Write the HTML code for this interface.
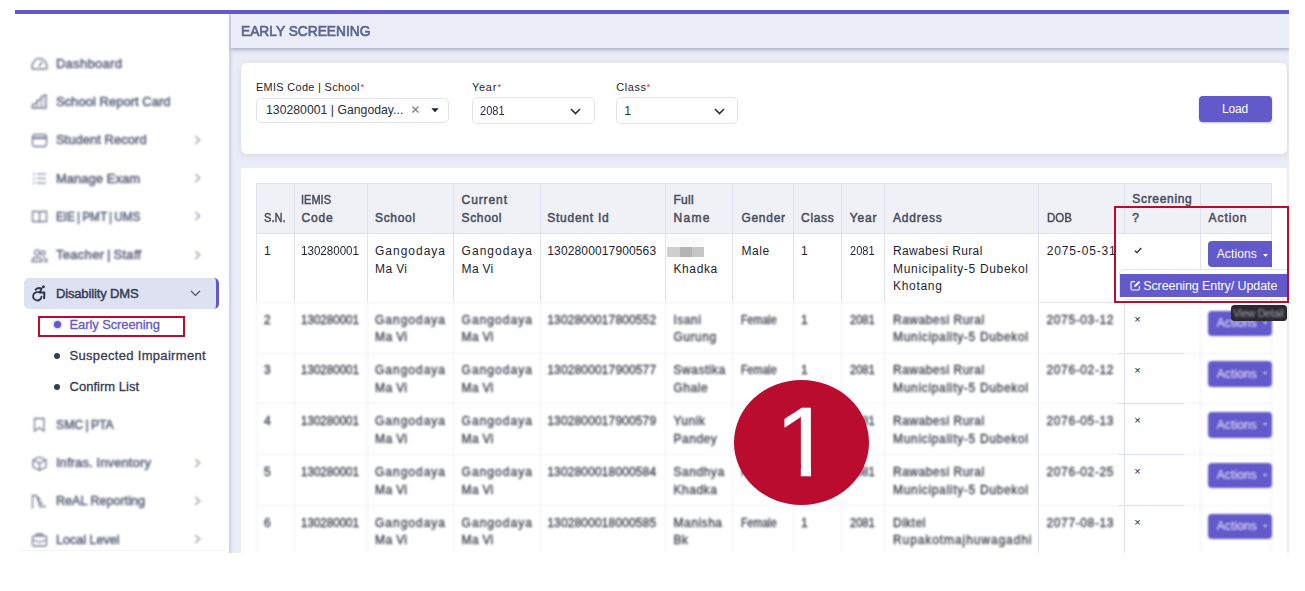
<!DOCTYPE html>
<html lang="en">
<head>
<meta charset="utf-8">
<title>Early Screening</title>
<style>
html,body{margin:0;padding:0;background:#fff;}
body{width:1305px;height:591px;overflow:hidden;position:relative;font-family:"Liberation Sans",sans-serif;}
#app{position:absolute;left:0;top:0;width:1305px;height:591px;overflow:hidden;clip-path:inset(10px 16px 38px 15px);background:#fff;}
.a{position:absolute;box-sizing:border-box;}
.t{position:absolute;white-space:nowrap;line-height:1;font-family:"Liberation Sans","DejaVu Sans",sans-serif;}
.vl{position:absolute;width:1px;background:#dfe2ec;}
.hl{position:absolute;height:1px;background:#dfe2ec;}
.btn{position:absolute;background:#6259ca;border-radius:4px;}
.sel{position:absolute;box-sizing:border-box;border:1px solid #e1e4ee;border-radius:5px;background:#fff;}
.ico{position:absolute;filter:blur(1.05px);}
svg{overflow:visible}
</style>
</head>
<body>
<div id="app">
  <!-- top purple bar -->
  <div class="a" style="left:15px;top:10px;width:1274px;height:4.2px;background:#6259ca;"></div>
  <!-- sidebar -->
  <div class="a" style="left:15px;top:14px;width:214.5px;height:545px;background:#fff;"></div>
  <!-- main bg -->
  <div class="a" style="left:229.3px;top:14px;width:1060px;height:545px;background:#eaedf7;box-shadow:inset 3px 0 3px -1px rgba(150,155,195,.38);"></div>
  <!-- page header -->
  <div class="a" style="left:231px;top:14px;width:1059px;height:34.3px;background:#ebedf8;box-shadow:0 1.5px 2px rgba(130,135,165,.38),0 3px 5px rgba(120,125,160,.2);"></div>
  <!-- filter card -->
  <div class="a" style="left:240.8px;top:62.8px;width:1045.8px;height:91.1px;background:#fff;border-radius:6px;box-shadow:0 2px 6px rgba(160,165,200,.25);"></div>
  <!-- table card -->
  <div class="a" style="left:240.8px;top:168px;width:1045.8px;height:400px;background:#fff;border-radius:1px;"></div>

  <!-- selects -->
  <div class="sel" style="left:256px;top:97.8px;width:193.2px;height:24.8px;"></div>
  <div class="sel" style="left:472px;top:97.4px;width:122.5px;height:26.3px;"></div>
  <div class="sel" style="left:615.8px;top:97.4px;width:121.8px;height:26.3px;"></div>
  <svg class="a" style="left:412px;top:106.3px;" width="7" height="7" viewBox="0 0 7 7"><path d="M0.5 0.5 L6.5 6.5 M6.5 0.5 L0.5 6.5" stroke="#7c7f88" stroke-width="1.25" fill="none"/></svg>
  <svg class="a" style="left:431.4px;top:108.2px;" width="8" height="4.4" viewBox="0 0 9 5"><path d="M0.3 0.3 H8.7 L4.5 4.7 Z" fill="#1f2330"/></svg>
  <svg class="a" style="left:569.6px;top:107.9px;" width="11" height="7" viewBox="0 0 11 7"><path d="M1 1 L5.5 5.6 L10 1" stroke="#2a2e3b" stroke-width="1.5" fill="none"/></svg>
  <svg class="a" style="left:713.6px;top:107.9px;" width="11" height="7" viewBox="0 0 11 7"><path d="M1 1 L5.5 5.6 L10 1" stroke="#2a2e3b" stroke-width="1.5" fill="none"/></svg>
  <!-- load button -->
  <div class="btn" style="left:1199px;top:96px;width:73px;height:26px;box-shadow:0 1px 2px rgba(98,89,202,.4);"></div>

  <!-- sidebar active -->
  <div class="a" style="left:24.4px;top:278.3px;width:194.2px;height:30.5px;background:#dde1f2;border-radius:5px;border-right:3px solid #6259ca;"></div>
  <div class="a" style="left:38px;top:316px;width:146.5px;height:20.6px;border:2px solid #ba0c2f;"></div>
  <div class="a" style="left:53.6px;top:321px;width:7.4px;height:7.4px;border-radius:50%;background:#6259ca;box-shadow:0 0 2px 1px rgba(98,89,202,.35);"></div>
  <div class="a" style="left:54.3px;top:353px;width:6px;height:6px;border-radius:50%;background:#363c52;"></div>
  <div class="a" style="left:54.3px;top:384px;width:6px;height:6px;border-radius:50%;background:#363c52;"></div>
  <div class="a" style="left:20px;top:550px;width:205px;height:1px;background:#f3f3f7;filter:blur(.6px);"></div>
  <svg class="ico" style="left:31px;top:56.0px;" width="17" height="15" viewBox="0 0 17 15" fill="none" stroke="#757b93" stroke-width="1.3"><path d="M1 11.5 A7.5 9 0 0 1 16 11.5 Q16 13 14.8 13 H2.2 Q1 13 1 11.5 Z" stroke-width="1.5"/><path d="M8 10.5 L11.2 5.6" stroke-width="1.5"/></svg>
<svg class="ico" style="left:31px;top:94.0px;" width="17" height="15" viewBox="0 0 17 15" fill="none" stroke="#757b93" stroke-width="1.3"><path d="M1.4 14 V10.4 L5.8 9 V6.8 L10.3 5 V2.8 L15 0.9 V14 Z" fill="#e6e8f0" stroke-width="1.4"/><path d="M5.8 9 V14 M10.3 5 V14" stroke-width="1" stroke="#9ea3b6"/></svg>
<svg class="ico" style="left:31px;top:132.5px;" width="17" height="15" viewBox="0 0 17 15" fill="none" stroke="#757b93" stroke-width="1.3"><rect x="1.5" y="1.5" width="14" height="12" rx="2.5"/><path d="M1.5 5 H15.5" stroke-width="2.2"/></svg>
<svg class="ico" style="left:31px;top:171.0px;" width="17" height="15" viewBox="0 0 17 15" fill="none" stroke="#757b93" stroke-width="1.3"><path d="M2 3 H4 M6 3 H15 M2 7.5 H4 M6 7.5 H15 M2 12 H4 M6 12 H15" stroke="#9a9fb0"/></svg>
<svg class="ico" style="left:31px;top:209.0px;" width="17" height="15" viewBox="0 0 17 15" fill="none" stroke="#757b93" stroke-width="1.3"><path d="M1.5 2.5 H7 Q8.5 2.5 8.5 4 V13.5 Q8.5 12.5 7 12.5 H1.5 Z M15.5 2.5 H10 Q8.5 2.5 8.5 4 V13.5 Q8.5 12.5 10 12.5 H15.5 Z"/></svg>
<svg class="ico" style="left:31px;top:247.5px;" width="17" height="15" viewBox="0 0 17 15" fill="none" stroke="#757b93" stroke-width="1.3"><circle cx="6" cy="4.5" r="2.6"/><circle cx="12" cy="5" r="2.1"/><path d="M1 13.5 Q1 9.5 6 9.5 Q11 9.5 11 13.5 Z M12 9.8 Q16 9.8 16 13.5 H13"/></svg>
<svg class="ico" style="left:31px;top:417.0px;" width="17" height="15" viewBox="0 0 17 15" fill="none" stroke="#757b93" stroke-width="1.3"><path d="M3.5 1.5 H13 V14 L8.2 10.6 L3.5 14 Z"/></svg>
<svg class="ico" style="left:31px;top:455.5px;" width="17" height="15" viewBox="0 0 17 15" fill="none" stroke="#757b93" stroke-width="1.3"><path d="M8.5 1 L15 4 V11 L8.5 14.3 L2 11 V4 Z M2 4 L8.5 7.2 L15 4 M8.5 7.2 V14.3"/></svg>
<svg class="ico" style="left:31px;top:493.8px;" width="17" height="15" viewBox="0 0 17 15" fill="none" stroke="#757b93" stroke-width="1.3"><path d="M1.5 14.5 V1.5 H5.5 L8 5 M6 5.5 H10 M7 9 H12 M8 12.5 H15 M5.5 1.5 L9.5 13" /></svg>
<svg class="ico" style="left:31px;top:531.6px;" width="17" height="15" viewBox="0 0 17 15" fill="none" stroke="#757b93" stroke-width="1.3"><rect x="1.5" y="4" width="14" height="10" rx="1.5"/><path d="M5.5 4 V2 H11.5 V4 M1.5 8 L8.5 10 L15.5 8"/></svg>
<svg class="ico" style="left:194px;top:134.5px;" width="7" height="10" viewBox="0 0 7 10" fill="none" stroke="#9a9fb2" stroke-width="1.4"><path d="M1.2 1 L5.6 5 L1.2 9"/></svg>
<svg class="ico" style="left:194px;top:173.0px;" width="7" height="10" viewBox="0 0 7 10" fill="none" stroke="#9a9fb2" stroke-width="1.4"><path d="M1.2 1 L5.6 5 L1.2 9"/></svg>
<svg class="ico" style="left:194px;top:211.0px;" width="7" height="10" viewBox="0 0 7 10" fill="none" stroke="#9a9fb2" stroke-width="1.4"><path d="M1.2 1 L5.6 5 L1.2 9"/></svg>
<svg class="ico" style="left:194px;top:249.5px;" width="7" height="10" viewBox="0 0 7 10" fill="none" stroke="#9a9fb2" stroke-width="1.4"><path d="M1.2 1 L5.6 5 L1.2 9"/></svg>
<svg class="ico" style="left:194px;top:457.5px;" width="7" height="10" viewBox="0 0 7 10" fill="none" stroke="#9a9fb2" stroke-width="1.4"><path d="M1.2 1 L5.6 5 L1.2 9"/></svg>
<svg class="ico" style="left:194px;top:495.8px;" width="7" height="10" viewBox="0 0 7 10" fill="none" stroke="#9a9fb2" stroke-width="1.4"><path d="M1.2 1 L5.6 5 L1.2 9"/></svg>
<svg class="ico" style="left:194px;top:533.6px;" width="7" height="10" viewBox="0 0 7 10" fill="none" stroke="#9a9fb2" stroke-width="1.4"><path d="M1.2 1 L5.6 5 L1.2 9"/></svg>
<svg class="a" style="left:190px;top:290.2px;" width="11" height="7" viewBox="0 0 11 7" fill="none" stroke="#4a5066" stroke-width="1.2"><path d="M1 1 L5.5 5.4 L10 1"/></svg>
<svg class="a" style="left:32px;top:285px;" width="14" height="16" viewBox="0 0 14 16" fill="none" stroke="#2f354c" stroke-width="2" stroke-linecap="round" stroke-linejoin="round"><circle cx="11.4" cy="1.7" r="1.5" fill="#2f354c" stroke="none"/><path d="M3.7 4.7 Q6.3 1.8 9.5 3.6 L7.7 7.5 H12.4 L12.1 13.2"/><path d="M6.2 7.2 A4.2 4.2 0 1 0 9.5 11.6" stroke-width="1.8"/></svg>

  <!-- table -->
  <div class="a" style="left:256px;top:183.3px;width:1016px;height:50.2px;background:#f0f1f7;"></div>
  <div class="vl" style="left:255.5px;top:183.3px;height:119px;"></div>
<div class="vl" style="left:255.5px;top:302.3px;height:260px;background:#f1f2f7;filter:blur(.8px);"></div>
<div class="vl" style="left:293.5px;top:183.3px;height:119px;"></div>
<div class="vl" style="left:293.5px;top:302.3px;height:260px;background:#f1f2f7;filter:blur(.8px);"></div>
<div class="vl" style="left:366.8px;top:183.3px;height:119px;"></div>
<div class="vl" style="left:366.8px;top:302.3px;height:260px;background:#f1f2f7;filter:blur(.8px);"></div>
<div class="vl" style="left:452.7px;top:183.3px;height:119px;"></div>
<div class="vl" style="left:452.7px;top:302.3px;height:260px;background:#f1f2f7;filter:blur(.8px);"></div>
<div class="vl" style="left:540.0px;top:183.3px;height:119px;"></div>
<div class="vl" style="left:540.0px;top:302.3px;height:260px;background:#f1f2f7;filter:blur(.8px);"></div>
<div class="vl" style="left:664.7px;top:183.3px;height:119px;"></div>
<div class="vl" style="left:664.7px;top:302.3px;height:260px;background:#f1f2f7;filter:blur(.8px);"></div>
<div class="vl" style="left:732.0px;top:183.3px;height:119px;"></div>
<div class="vl" style="left:732.0px;top:302.3px;height:260px;background:#f1f2f7;filter:blur(.8px);"></div>
<div class="vl" style="left:792.8px;top:183.3px;height:119px;"></div>
<div class="vl" style="left:792.8px;top:302.3px;height:260px;background:#f1f2f7;filter:blur(.8px);"></div>
<div class="vl" style="left:841.0px;top:183.3px;height:119px;"></div>
<div class="vl" style="left:841.0px;top:302.3px;height:260px;background:#f1f2f7;filter:blur(.8px);"></div>
<div class="vl" style="left:883.5px;top:183.3px;height:119px;"></div>
<div class="vl" style="left:883.5px;top:302.3px;height:260px;background:#f1f2f7;filter:blur(.8px);"></div>
<div class="vl" style="left:1038.0px;top:183.3px;height:119px;"></div>
<div class="vl" style="left:1038.0px;top:302.3px;height:260px;"></div>
<div class="vl" style="left:1124.2px;top:183.3px;height:119px;"></div>
<div class="vl" style="left:1124.2px;top:302.3px;height:260px;"></div>
<div class="vl" style="left:1200.0px;top:183.3px;height:119px;"></div>
<div class="vl" style="left:1200.0px;top:302.3px;height:260px;background:#f1f2f7;filter:blur(.8px);"></div>
<div class="vl" style="left:1271.0px;top:183.3px;height:119px;"></div>
<div class="vl" style="left:1271.0px;top:302.3px;height:260px;background:#f1f2f7;filter:blur(.8px);"></div>
<div class="hl" style="left:256px;top:182.8px;width:1016px;"></div>
<div class="hl" style="left:256px;top:233.0px;width:1016px;"></div>
<div class="hl" style="left:256px;top:301.8px;width:782px;background:#f1f2f7;filter:blur(.9px);"></div>
<div class="hl" style="left:1038px;top:301.8px;width:80px;"></div>
<div class="hl" style="left:256px;top:352.5px;width:1016px;background:#f1f2f7;filter:blur(.9px);"></div>
<div class="hl" style="left:1118px;top:352.5px;width:66px;"></div>
<div class="hl" style="left:256px;top:403.2px;width:1016px;background:#f1f2f7;filter:blur(.9px);"></div>
<div class="hl" style="left:1118px;top:403.2px;width:66px;"></div>
<div class="hl" style="left:256px;top:454.0px;width:1016px;background:#f1f2f7;filter:blur(.9px);"></div>
<div class="hl" style="left:1118px;top:454.0px;width:66px;"></div>
<div class="hl" style="left:256px;top:504.7px;width:1016px;background:#f1f2f7;filter:blur(.9px);"></div>
<div class="hl" style="left:1118px;top:504.7px;width:66px;"></div>
<div class="hl" style="left:256px;top:555.4px;width:1016px;background:#f1f2f7;filter:blur(.9px);"></div>
<div class="hl" style="left:1118px;top:555.4px;width:66px;"></div>

  <!-- pixelated name -->
  <div class="a" style="left:667px;top:235.5px;width:37px;height:12px;background:#fafafa;"></div>
  <div class="a" style="left:667px;top:247.4px;width:37px;height:9.6px;background:#cfcfcf;"></div>
  <div class="a" style="left:679.5px;top:247.4px;width:12px;height:9.6px;background:#b4b4b4;"></div>
  <div class="a" style="left:691.5px;top:247.4px;width:12.5px;height:9.6px;background:#c6c6c6;"></div>

  <div class="btn" style="left:1208px;top:310.7px;width:63.8px;height:25.6px;filter:blur(.8px);"></div>
<svg class="a" style="left:1263px;top:321.7px;filter:blur(.8px);opacity:.85;" width="4.4" height="2.6" viewBox="0 0 5 3"><path d="M0 0 H5 L2.5 3 Z" fill="#fff"/></svg>
<div class="btn" style="left:1208px;top:361.4px;width:63.8px;height:25.6px;filter:blur(.8px);"></div>
<svg class="a" style="left:1263px;top:372.4px;filter:blur(.8px);opacity:.85;" width="4.4" height="2.6" viewBox="0 0 5 3"><path d="M0 0 H5 L2.5 3 Z" fill="#fff"/></svg>
<div class="btn" style="left:1208px;top:412.1px;width:63.8px;height:25.6px;filter:blur(.8px);"></div>
<svg class="a" style="left:1263px;top:423.1px;filter:blur(.8px);opacity:.85;" width="4.4" height="2.6" viewBox="0 0 5 3"><path d="M0 0 H5 L2.5 3 Z" fill="#fff"/></svg>
<div class="btn" style="left:1208px;top:462.9px;width:63.8px;height:25.6px;filter:blur(.8px);"></div>
<svg class="a" style="left:1263px;top:473.9px;filter:blur(.8px);opacity:.85;" width="4.4" height="2.6" viewBox="0 0 5 3"><path d="M0 0 H5 L2.5 3 Z" fill="#fff"/></svg>
<div class="btn" style="left:1208px;top:513.6px;width:63.8px;height:25.6px;filter:blur(.8px);"></div>
<svg class="a" style="left:1263px;top:524.6px;filter:blur(.8px);opacity:.85;" width="4.4" height="2.6" viewBox="0 0 5 3"><path d="M0 0 H5 L2.5 3 Z" fill="#fff"/></svg>

  <!-- highlighted region overlay parts -->
  <div class="a" style="left:1272px;top:208px;width:17px;height:94px;background:#fff;"></div>
  <div class="a" style="left:1115px;top:234.5px;width:9.5px;height:67px;background:#fff;"></div>
  <!-- row1 actions -->
  <div class="a" style="left:1207.8px;top:241.2px;width:64.2px;height:26.2px;background:#6259ca;border-radius:4px 0 0 4px;"></div>
  <svg class="a" style="left:1262.6px;top:253.6px;" width="5" height="3" viewBox="0 0 5 3"><path d="M0 0 H5 L2.5 3 Z" fill="#fff"/></svg>
  <!-- dropdown -->
  <div class="a" style="left:1119.3px;top:269.3px;width:180px;height:31px;background:#fff;border:1px solid #e3e4ee;border-radius:5px;"></div>
  <div class="a" style="left:1120.3px;top:274.2px;width:170px;height:23px;background:#6259ca;"></div>
  <svg class="a" style="left:1129.6px;top:279.8px;" width="11" height="11" viewBox="0 0 11 11"><path d="M5 1.6 H2.2 Q1 1.6 1 2.8 V8.8 Q1 10 2.2 10 H8.2 Q9.4 10 9.4 8.8 V6" stroke="#fff" stroke-width="1.1" fill="none"/><path d="M4.2 7 L4.6 5.2 L8.8 1 L10.2 2.4 L6 6.6 Z" fill="#fff"/></svg>
  <!-- red highlight rect -->
  <div class="a" style="left:1113.5px;top:206.3px;width:175.5px;height:96.5px;border:2.6px solid #ba0c2f;"></div>
  <!-- tooltip -->
  <div class="a" style="left:1230.5px;top:304.9px;width:56.3px;height:16.1px;background:#2a2930;border-radius:3.5px;filter:blur(.4px);z-index:5;"></div>

<span class="t" style="left:55.90px;top:56.53px;font-size:13px;color:#5a6178;letter-spacing:0.299px;filter:blur(1.1px);-webkit-text-stroke:0.5px #5a6178;">Dashboard</span>
<span class="t" style="left:55.90px;top:94.53px;font-size:13px;color:#5a6178;letter-spacing:0.031px;filter:blur(1.1px);-webkit-text-stroke:0.5px #5a6178;">School Report Card</span>
<span class="t" style="left:55.90px;top:133.03px;font-size:13px;color:#5a6178;letter-spacing:0.035px;filter:blur(1.1px);-webkit-text-stroke:0.5px #5a6178;">Student Record</span>
<span class="t" style="left:55.90px;top:171.53px;font-size:13px;color:#5a6178;letter-spacing:0.047px;filter:blur(1.1px);-webkit-text-stroke:0.5px #5a6178;">Manage Exam</span>
<span class="t" style="left:55.90px;top:209.53px;font-size:13px;color:#5a6178;word-spacing:-1.2px;transform:scaleX(0.9021);transform-origin:0 50%;filter:blur(1.1px);-webkit-text-stroke:0.5px #5a6178;">EIE | PMT | UMS</span>
<span class="t" style="left:55.90px;top:248.03px;font-size:13px;color:#5a6178;letter-spacing:0.310px;word-spacing:-1.2px;filter:blur(1.1px);-webkit-text-stroke:0.5px #5a6178;">Teacher | Staff</span>
<span class="t" style="left:55.90px;top:286.63px;font-size:13px;color:#363c52;letter-spacing:-0.132px;-webkit-text-stroke:0.45px #363c52;">Disability DMS</span>
<span class="t" style="left:69.50px;top:318.33px;font-size:13px;color:#6259ca;letter-spacing:-0.099px;-webkit-text-stroke:0.3px #6259ca;">Early Screening</span>
<span class="t" style="left:69.50px;top:349.13px;font-size:13px;color:#363c52;letter-spacing:0.317px;-webkit-text-stroke:0.3px #363c52;">Suspected Impairment</span>
<span class="t" style="left:69.50px;top:380.13px;font-size:13px;color:#363c52;letter-spacing:0.022px;-webkit-text-stroke:0.3px #363c52;">Confirm List</span>
<span class="t" style="left:55.90px;top:417.53px;font-size:13px;color:#5a6178;word-spacing:-1.2px;transform:scaleX(0.9410);transform-origin:0 50%;filter:blur(1.1px);-webkit-text-stroke:0.5px #5a6178;">SMC | PTA</span>
<span class="t" style="left:55.90px;top:456.03px;font-size:13px;color:#5a6178;letter-spacing:0.111px;filter:blur(1.1px);-webkit-text-stroke:0.5px #5a6178;">Infras. Inventory</span>
<span class="t" style="left:55.90px;top:494.33px;font-size:13px;color:#5a6178;transform:scaleX(0.9683);transform-origin:0 50%;filter:blur(1.1px);-webkit-text-stroke:0.5px #5a6178;">ReAL Reporting</span>
<span class="t" style="left:55.90px;top:532.83px;font-size:13px;color:#5a6178;transform:scaleX(0.9668);transform-origin:0 50%;filter:blur(1.1px);-webkit-text-stroke:0.5px #5a6178;">Local Level</span>
<span class="t" style="left:241.20px;top:22.96px;font-size:15px;color:#5b6690;transform:scaleX(0.9167);transform-origin:0 50%;-webkit-text-stroke:0.7px #5b6690;">EARLY SCREENING</span>
<span class="t" style="left:256.00px;top:81.76px;font-size:10.9px;color:#1f2330;letter-spacing:0.331px;">EMIS Code | School</span>
<span class="t" style="left:360.40px;top:81.91px;font-size:9.5px;color:#e8284d;">*</span>
<span class="t" style="left:472.00px;top:81.76px;font-size:10.9px;color:#1f2330;letter-spacing:0.761px;">Year</span>
<span class="t" style="left:497.40px;top:81.91px;font-size:9.5px;color:#e8284d;">*</span>
<span class="t" style="left:616.30px;top:81.76px;font-size:10.9px;color:#1f2330;letter-spacing:0.616px;">Class</span>
<span class="t" style="left:646.40px;top:81.91px;font-size:9.5px;color:#e8284d;">*</span>
<span class="t" style="left:266.00px;top:104.36px;font-size:12.2px;color:#2a2e3b;letter-spacing:0.039px;">130280001 | Gangoday...</span>
<span class="t" style="left:480.20px;top:104.56px;font-size:12.2px;color:#2a2e3b;transform:scaleX(0.9069);transform-origin:0 50%;">2081</span>
<span class="t" style="left:624.20px;top:104.56px;font-size:12.2px;color:#2a2e3b;">1</span>
<span class="t" style="left:1221.90px;top:102.57px;font-size:12px;color:#ffffff;letter-spacing:-0.101px;">Load</span>
<span class="t" style="left:264.10px;top:211.77px;font-size:12px;color:#4a4f5e;transform:scaleX(0.9253);transform-origin:0 50%;-webkit-text-stroke:0.5px #4a4f5e;">S.N.</span>
<span class="t" style="left:301.40px;top:193.57px;font-size:12px;color:#4a4f5e;transform:scaleX(0.9182);transform-origin:0 50%;-webkit-text-stroke:0.5px #4a4f5e;">IEMIS</span>
<span class="t" style="left:301.40px;top:211.77px;font-size:12px;color:#4a4f5e;letter-spacing:0.837px;-webkit-text-stroke:0.5px #4a4f5e;">Code</span>
<span class="t" style="left:375.00px;top:211.77px;font-size:12px;color:#4a4f5e;letter-spacing:0.679px;-webkit-text-stroke:0.5px #4a4f5e;">School</span>
<span class="t" style="left:461.60px;top:193.57px;font-size:12px;color:#4a4f5e;letter-spacing:0.897px;-webkit-text-stroke:0.5px #4a4f5e;">Current</span>
<span class="t" style="left:461.60px;top:211.77px;font-size:12px;color:#4a4f5e;letter-spacing:0.619px;-webkit-text-stroke:0.5px #4a4f5e;">School</span>
<span class="t" style="left:547.30px;top:211.77px;font-size:12px;color:#4a4f5e;letter-spacing:0.742px;-webkit-text-stroke:0.5px #4a4f5e;">Student Id</span>
<span class="t" style="left:673.40px;top:193.57px;font-size:12px;color:#4a4f5e;letter-spacing:0.319px;-webkit-text-stroke:0.5px #4a4f5e;">Full</span>
<span class="t" style="left:673.40px;top:211.77px;font-size:12px;color:#4a4f5e;letter-spacing:1.328px;-webkit-text-stroke:0.5px #4a4f5e;">Name</span>
<span class="t" style="left:741.40px;top:211.77px;font-size:12px;color:#4a4f5e;letter-spacing:0.734px;-webkit-text-stroke:0.5px #4a4f5e;">Gender</span>
<span class="t" style="left:801.10px;top:211.77px;font-size:12px;color:#4a4f5e;letter-spacing:0.671px;-webkit-text-stroke:0.5px #4a4f5e;">Class</span>
<span class="t" style="left:849.80px;top:211.77px;font-size:12px;color:#4a4f5e;letter-spacing:0.783px;-webkit-text-stroke:0.5px #4a4f5e;">Year</span>
<span class="t" style="left:893.00px;top:211.77px;font-size:12px;color:#4a4f5e;letter-spacing:0.778px;-webkit-text-stroke:0.5px #4a4f5e;">Address</span>
<span class="t" style="left:1046.50px;top:211.77px;font-size:12px;color:#4a4f5e;transform:scaleX(0.9571);transform-origin:0 50%;-webkit-text-stroke:0.5px #4a4f5e;">DOB</span>
<span class="t" style="left:1132.30px;top:193.07px;font-size:12px;color:#4a4f5e;letter-spacing:0.682px;-webkit-text-stroke:0.5px #4a4f5e;">Screening</span>
<span class="t" style="left:1132.30px;top:211.77px;font-size:12px;color:#4a4f5e;letter-spacing:0.500px;-webkit-text-stroke:0.5px #4a4f5e;">?</span>
<span class="t" style="left:1208.60px;top:211.77px;font-size:12px;color:#4a4f5e;letter-spacing:0.908px;-webkit-text-stroke:0.5px #4a4f5e;">Action</span>
<span class="t" style="left:264.10px;top:244.87px;font-size:12px;color:#1f2330;">1</span>
<span class="t" style="left:301.40px;top:244.87px;font-size:12px;color:#1f2330;transform:scaleX(0.9654);transform-origin:0 50%;">130280001</span>
<span class="t" style="left:375.00px;top:244.87px;font-size:12px;color:#1f2330;letter-spacing:0.992px;">Gangodaya</span>
<span class="t" style="left:375.00px;top:262.67px;font-size:12px;color:#1f2330;letter-spacing:0.383px;">Ma Vi</span>
<span class="t" style="left:461.60px;top:244.87px;font-size:12px;color:#1f2330;letter-spacing:1.030px;">Gangodaya</span>
<span class="t" style="left:461.60px;top:262.67px;font-size:12px;color:#1f2330;letter-spacing:0.308px;">Ma Vi</span>
<span class="t" style="left:547.30px;top:244.87px;font-size:12px;color:#1f2330;letter-spacing:0.135px;">1302800017900563</span>
<span class="t" style="left:673.40px;top:262.67px;font-size:12px;color:#1f2330;letter-spacing:0.639px;">Khadka</span>
<span class="t" style="left:741.40px;top:244.87px;font-size:12px;color:#1f2330;letter-spacing:0.561px;">Male</span>
<span class="t" style="left:801.00px;top:244.87px;font-size:12px;color:#1f2330;">1</span>
<span class="t" style="left:849.80px;top:244.87px;font-size:12px;color:#1f2330;transform:scaleX(0.9212);transform-origin:0 50%;">2081</span>
<span class="t" style="left:893.00px;top:244.87px;font-size:12px;color:#1f2330;letter-spacing:0.354px;">Rawabesi Rural</span>
<span class="t" style="left:893.00px;top:262.67px;font-size:12px;color:#1f2330;letter-spacing:0.679px;">Municipality-5 Dubekol</span>
<span class="t" style="left:893.00px;top:280.47px;font-size:12px;color:#1f2330;letter-spacing:0.697px;">Khotang</span>
<span class="t" style="left:1046.80px;top:244.87px;font-size:12px;color:#1f2330;letter-spacing:0.845px;">2075-05-31</span>
<span class="t" style="left:1216.70px;top:248.17px;font-size:12px;color:#fff;letter-spacing:0.123px;">Actions</span>
<span class="t" style="left:1143.20px;top:279.70px;font-size:12.5px;color:#fff;letter-spacing:-0.091px;">Screening Entry/ Update</span>
<span class="t" style="left:1233.20px;top:307.57px;font-size:10.5px;color:#a2a2a8;letter-spacing:-0.194px;z-index:6;filter:blur(0.8px);">View Detail</span>
<span class="t" style="left:264.10px;top:313.67px;font-size:12px;color:#41444f;filter:blur(0.9px);-webkit-text-stroke:0.35px #41444f;">2</span>
<span class="t" style="left:301.40px;top:313.67px;font-size:12px;color:#41444f;transform:scaleX(0.9654);transform-origin:0 50%;filter:blur(0.9px);-webkit-text-stroke:0.35px #41444f;">130280001</span>
<span class="t" style="left:375.00px;top:313.67px;font-size:12px;color:#41444f;letter-spacing:0.992px;filter:blur(0.9px);-webkit-text-stroke:0.35px #41444f;">Gangodaya</span>
<span class="t" style="left:375.00px;top:331.37px;font-size:12px;color:#41444f;letter-spacing:0.383px;filter:blur(0.9px);-webkit-text-stroke:0.35px #41444f;">Ma Vi</span>
<span class="t" style="left:461.60px;top:313.67px;font-size:12px;color:#41444f;letter-spacing:1.030px;filter:blur(0.9px);-webkit-text-stroke:0.35px #41444f;">Gangodaya</span>
<span class="t" style="left:461.60px;top:331.37px;font-size:12px;color:#41444f;letter-spacing:0.308px;filter:blur(0.9px);-webkit-text-stroke:0.35px #41444f;">Ma Vi</span>
<span class="t" style="left:547.30px;top:313.67px;font-size:12px;color:#41444f;letter-spacing:0.135px;filter:blur(0.9px);-webkit-text-stroke:0.35px #41444f;">1302800017800552</span>
<span class="t" style="left:673.40px;top:313.67px;font-size:12px;color:#41444f;letter-spacing:0.550px;filter:blur(0.9px);-webkit-text-stroke:0.35px #41444f;">Isani</span>
<span class="t" style="left:673.40px;top:331.37px;font-size:12px;color:#41444f;letter-spacing:0.550px;filter:blur(0.9px);-webkit-text-stroke:0.35px #41444f;">Gurung</span>
<span class="t" style="left:741.40px;top:313.67px;font-size:12px;color:#41444f;transform:scaleX(0.8922);transform-origin:0 50%;filter:blur(0.9px);-webkit-text-stroke:0.35px #41444f;">Female</span>
<span class="t" style="left:801.00px;top:313.67px;font-size:12px;color:#41444f;filter:blur(0.9px);-webkit-text-stroke:0.35px #41444f;">1</span>
<span class="t" style="left:849.80px;top:313.67px;font-size:12px;color:#41444f;transform:scaleX(0.9212);transform-origin:0 50%;filter:blur(0.9px);-webkit-text-stroke:0.35px #41444f;">2081</span>
<span class="t" style="left:893.00px;top:313.67px;font-size:12px;color:#41444f;letter-spacing:0.500px;filter:blur(0.9px);-webkit-text-stroke:0.35px #41444f;">Rawabesi Rural</span>
<span class="t" style="left:893.00px;top:331.37px;font-size:12px;color:#41444f;letter-spacing:0.679px;filter:blur(0.9px);-webkit-text-stroke:0.35px #41444f;">Municipality-5 Dubekol</span>
<span class="t" style="left:1046.50px;top:313.67px;font-size:12px;color:#41444f;letter-spacing:0.623px;filter:blur(0.9px);-webkit-text-stroke:0.35px #41444f;">2075-03-12</span>
<span class="t" style="left:1216.70px;top:317.27px;font-size:12px;color:#f3f2ff;letter-spacing:0.123px;filter:blur(0.9px);">Actions</span>
<span class="t" style="left:264.10px;top:364.39px;font-size:12px;color:#41444f;filter:blur(0.9px);-webkit-text-stroke:0.35px #41444f;">3</span>
<span class="t" style="left:301.40px;top:364.39px;font-size:12px;color:#41444f;transform:scaleX(0.9654);transform-origin:0 50%;filter:blur(0.9px);-webkit-text-stroke:0.35px #41444f;">130280001</span>
<span class="t" style="left:375.00px;top:364.39px;font-size:12px;color:#41444f;letter-spacing:0.992px;filter:blur(0.9px);-webkit-text-stroke:0.35px #41444f;">Gangodaya</span>
<span class="t" style="left:375.00px;top:382.09px;font-size:12px;color:#41444f;letter-spacing:0.383px;filter:blur(0.9px);-webkit-text-stroke:0.35px #41444f;">Ma Vi</span>
<span class="t" style="left:461.60px;top:364.39px;font-size:12px;color:#41444f;letter-spacing:1.030px;filter:blur(0.9px);-webkit-text-stroke:0.35px #41444f;">Gangodaya</span>
<span class="t" style="left:461.60px;top:382.09px;font-size:12px;color:#41444f;letter-spacing:0.308px;filter:blur(0.9px);-webkit-text-stroke:0.35px #41444f;">Ma Vi</span>
<span class="t" style="left:547.30px;top:364.39px;font-size:12px;color:#41444f;letter-spacing:0.135px;filter:blur(0.9px);-webkit-text-stroke:0.35px #41444f;">1302800017900577</span>
<span class="t" style="left:673.40px;top:364.39px;font-size:12px;color:#41444f;letter-spacing:0.550px;filter:blur(0.9px);-webkit-text-stroke:0.35px #41444f;">Swastika</span>
<span class="t" style="left:673.40px;top:382.09px;font-size:12px;color:#41444f;letter-spacing:0.550px;filter:blur(0.9px);-webkit-text-stroke:0.35px #41444f;">Ghale</span>
<span class="t" style="left:741.40px;top:364.39px;font-size:12px;color:#41444f;transform:scaleX(0.8922);transform-origin:0 50%;filter:blur(0.9px);-webkit-text-stroke:0.35px #41444f;">Female</span>
<span class="t" style="left:801.00px;top:364.39px;font-size:12px;color:#41444f;filter:blur(0.9px);-webkit-text-stroke:0.35px #41444f;">1</span>
<span class="t" style="left:849.80px;top:364.39px;font-size:12px;color:#41444f;transform:scaleX(0.9212);transform-origin:0 50%;filter:blur(0.9px);-webkit-text-stroke:0.35px #41444f;">2081</span>
<span class="t" style="left:893.00px;top:364.39px;font-size:12px;color:#41444f;letter-spacing:0.500px;filter:blur(0.9px);-webkit-text-stroke:0.35px #41444f;">Rawabesi Rural</span>
<span class="t" style="left:893.00px;top:382.09px;font-size:12px;color:#41444f;letter-spacing:0.679px;filter:blur(0.9px);-webkit-text-stroke:0.35px #41444f;">Municipality-5 Dubekol</span>
<span class="t" style="left:1046.50px;top:364.39px;font-size:12px;color:#41444f;letter-spacing:0.623px;filter:blur(0.9px);-webkit-text-stroke:0.35px #41444f;">2076-02-12</span>
<span class="t" style="left:1216.70px;top:367.99px;font-size:12px;color:#f3f2ff;letter-spacing:0.123px;filter:blur(0.9px);">Actions</span>
<span class="t" style="left:264.10px;top:415.11px;font-size:12px;color:#41444f;filter:blur(0.9px);-webkit-text-stroke:0.35px #41444f;">4</span>
<span class="t" style="left:301.40px;top:415.11px;font-size:12px;color:#41444f;transform:scaleX(0.9654);transform-origin:0 50%;filter:blur(0.9px);-webkit-text-stroke:0.35px #41444f;">130280001</span>
<span class="t" style="left:375.00px;top:415.11px;font-size:12px;color:#41444f;letter-spacing:0.992px;filter:blur(0.9px);-webkit-text-stroke:0.35px #41444f;">Gangodaya</span>
<span class="t" style="left:375.00px;top:432.81px;font-size:12px;color:#41444f;letter-spacing:0.383px;filter:blur(0.9px);-webkit-text-stroke:0.35px #41444f;">Ma Vi</span>
<span class="t" style="left:461.60px;top:415.11px;font-size:12px;color:#41444f;letter-spacing:1.030px;filter:blur(0.9px);-webkit-text-stroke:0.35px #41444f;">Gangodaya</span>
<span class="t" style="left:461.60px;top:432.81px;font-size:12px;color:#41444f;letter-spacing:0.308px;filter:blur(0.9px);-webkit-text-stroke:0.35px #41444f;">Ma Vi</span>
<span class="t" style="left:547.30px;top:415.11px;font-size:12px;color:#41444f;letter-spacing:0.135px;filter:blur(0.9px);-webkit-text-stroke:0.35px #41444f;">1302800017900579</span>
<span class="t" style="left:673.40px;top:415.11px;font-size:12px;color:#41444f;letter-spacing:0.550px;filter:blur(0.9px);-webkit-text-stroke:0.35px #41444f;">Yunik</span>
<span class="t" style="left:673.40px;top:432.81px;font-size:12px;color:#41444f;letter-spacing:0.550px;filter:blur(0.9px);-webkit-text-stroke:0.35px #41444f;">Pandey</span>
<span class="t" style="left:741.40px;top:415.11px;font-size:12px;color:#41444f;letter-spacing:0.561px;filter:blur(0.9px);-webkit-text-stroke:0.35px #41444f;">Male</span>
<span class="t" style="left:801.00px;top:415.11px;font-size:12px;color:#41444f;filter:blur(0.9px);-webkit-text-stroke:0.35px #41444f;">1</span>
<span class="t" style="left:849.80px;top:415.11px;font-size:12px;color:#41444f;transform:scaleX(0.9212);transform-origin:0 50%;filter:blur(0.9px);-webkit-text-stroke:0.35px #41444f;">2081</span>
<span class="t" style="left:893.00px;top:415.11px;font-size:12px;color:#41444f;letter-spacing:0.500px;filter:blur(0.9px);-webkit-text-stroke:0.35px #41444f;">Rawabesi Rural</span>
<span class="t" style="left:893.00px;top:432.81px;font-size:12px;color:#41444f;letter-spacing:0.679px;filter:blur(0.9px);-webkit-text-stroke:0.35px #41444f;">Municipality-5 Dubekol</span>
<span class="t" style="left:1046.50px;top:415.11px;font-size:12px;color:#41444f;letter-spacing:0.623px;filter:blur(0.9px);-webkit-text-stroke:0.35px #41444f;">2076-05-13</span>
<span class="t" style="left:1216.70px;top:418.71px;font-size:12px;color:#f3f2ff;letter-spacing:0.123px;filter:blur(0.9px);">Actions</span>
<span class="t" style="left:264.10px;top:465.83px;font-size:12px;color:#41444f;filter:blur(0.9px);-webkit-text-stroke:0.35px #41444f;">5</span>
<span class="t" style="left:301.40px;top:465.83px;font-size:12px;color:#41444f;transform:scaleX(0.9654);transform-origin:0 50%;filter:blur(0.9px);-webkit-text-stroke:0.35px #41444f;">130280001</span>
<span class="t" style="left:375.00px;top:465.83px;font-size:12px;color:#41444f;letter-spacing:0.992px;filter:blur(0.9px);-webkit-text-stroke:0.35px #41444f;">Gangodaya</span>
<span class="t" style="left:375.00px;top:483.53px;font-size:12px;color:#41444f;letter-spacing:0.383px;filter:blur(0.9px);-webkit-text-stroke:0.35px #41444f;">Ma Vi</span>
<span class="t" style="left:461.60px;top:465.83px;font-size:12px;color:#41444f;letter-spacing:1.030px;filter:blur(0.9px);-webkit-text-stroke:0.35px #41444f;">Gangodaya</span>
<span class="t" style="left:461.60px;top:483.53px;font-size:12px;color:#41444f;letter-spacing:0.308px;filter:blur(0.9px);-webkit-text-stroke:0.35px #41444f;">Ma Vi</span>
<span class="t" style="left:547.30px;top:465.83px;font-size:12px;color:#41444f;letter-spacing:0.135px;filter:blur(0.9px);-webkit-text-stroke:0.35px #41444f;">1302800018000584</span>
<span class="t" style="left:673.40px;top:465.83px;font-size:12px;color:#41444f;letter-spacing:0.550px;filter:blur(0.9px);-webkit-text-stroke:0.35px #41444f;">Sandhya</span>
<span class="t" style="left:673.40px;top:483.53px;font-size:12px;color:#41444f;letter-spacing:0.550px;filter:blur(0.9px);-webkit-text-stroke:0.35px #41444f;">Khadka</span>
<span class="t" style="left:741.40px;top:465.83px;font-size:12px;color:#41444f;transform:scaleX(0.8922);transform-origin:0 50%;filter:blur(0.9px);-webkit-text-stroke:0.35px #41444f;">Female</span>
<span class="t" style="left:801.00px;top:465.83px;font-size:12px;color:#41444f;filter:blur(0.9px);-webkit-text-stroke:0.35px #41444f;">1</span>
<span class="t" style="left:849.80px;top:465.83px;font-size:12px;color:#41444f;transform:scaleX(0.9212);transform-origin:0 50%;filter:blur(0.9px);-webkit-text-stroke:0.35px #41444f;">2081</span>
<span class="t" style="left:893.00px;top:465.83px;font-size:12px;color:#41444f;letter-spacing:0.500px;filter:blur(0.9px);-webkit-text-stroke:0.35px #41444f;">Rawabesi Rural</span>
<span class="t" style="left:893.00px;top:483.53px;font-size:12px;color:#41444f;letter-spacing:0.679px;filter:blur(0.9px);-webkit-text-stroke:0.35px #41444f;">Municipality-5 Dubekol</span>
<span class="t" style="left:1046.50px;top:465.83px;font-size:12px;color:#41444f;letter-spacing:0.623px;filter:blur(0.9px);-webkit-text-stroke:0.35px #41444f;">2076-02-25</span>
<span class="t" style="left:1216.70px;top:469.43px;font-size:12px;color:#f3f2ff;letter-spacing:0.123px;filter:blur(0.9px);">Actions</span>
<span class="t" style="left:264.10px;top:516.55px;font-size:12px;color:#41444f;filter:blur(0.9px);-webkit-text-stroke:0.35px #41444f;">6</span>
<span class="t" style="left:301.40px;top:516.55px;font-size:12px;color:#41444f;transform:scaleX(0.9654);transform-origin:0 50%;filter:blur(0.9px);-webkit-text-stroke:0.35px #41444f;">130280001</span>
<span class="t" style="left:375.00px;top:516.55px;font-size:12px;color:#41444f;letter-spacing:0.992px;filter:blur(0.9px);-webkit-text-stroke:0.35px #41444f;">Gangodaya</span>
<span class="t" style="left:375.00px;top:534.25px;font-size:12px;color:#41444f;letter-spacing:0.383px;filter:blur(0.9px);-webkit-text-stroke:0.35px #41444f;">Ma Vi</span>
<span class="t" style="left:461.60px;top:516.55px;font-size:12px;color:#41444f;letter-spacing:1.030px;filter:blur(0.9px);-webkit-text-stroke:0.35px #41444f;">Gangodaya</span>
<span class="t" style="left:461.60px;top:534.25px;font-size:12px;color:#41444f;letter-spacing:0.308px;filter:blur(0.9px);-webkit-text-stroke:0.35px #41444f;">Ma Vi</span>
<span class="t" style="left:547.30px;top:516.55px;font-size:12px;color:#41444f;letter-spacing:0.135px;filter:blur(0.9px);-webkit-text-stroke:0.35px #41444f;">1302800018000585</span>
<span class="t" style="left:673.40px;top:516.55px;font-size:12px;color:#41444f;letter-spacing:0.550px;filter:blur(0.9px);-webkit-text-stroke:0.35px #41444f;">Manisha</span>
<span class="t" style="left:673.40px;top:534.25px;font-size:12px;color:#41444f;letter-spacing:0.550px;filter:blur(0.9px);-webkit-text-stroke:0.35px #41444f;">Bk</span>
<span class="t" style="left:741.40px;top:516.55px;font-size:12px;color:#41444f;transform:scaleX(0.8922);transform-origin:0 50%;filter:blur(0.9px);-webkit-text-stroke:0.35px #41444f;">Female</span>
<span class="t" style="left:801.00px;top:516.55px;font-size:12px;color:#41444f;filter:blur(0.9px);-webkit-text-stroke:0.35px #41444f;">1</span>
<span class="t" style="left:849.80px;top:516.55px;font-size:12px;color:#41444f;transform:scaleX(0.9212);transform-origin:0 50%;filter:blur(0.9px);-webkit-text-stroke:0.35px #41444f;">2081</span>
<span class="t" style="left:893.00px;top:516.55px;font-size:12px;color:#41444f;letter-spacing:0.500px;filter:blur(0.9px);-webkit-text-stroke:0.35px #41444f;">Diktel</span>
<span class="t" style="left:893.00px;top:534.25px;font-size:12px;color:#41444f;letter-spacing:0.911px;filter:blur(0.9px);-webkit-text-stroke:0.35px #41444f;">Rupakotmajhuwagadhi</span>
<span class="t" style="left:1046.50px;top:516.55px;font-size:12px;color:#41444f;letter-spacing:0.623px;filter:blur(0.9px);-webkit-text-stroke:0.35px #41444f;">2077-08-13</span>
<span class="t" style="left:1216.70px;top:520.15px;font-size:12px;color:#f3f2ff;letter-spacing:0.123px;filter:blur(0.9px);">Actions</span>
<svg class="a" style="left:1134px;top:246.8px;" width="8" height="7" viewBox="0 0 8 7"><path d="M0.8 3.6 L2.9 5.6 L7.2 1" stroke="#1f2330" stroke-width="1.25" fill="none"/></svg>
<span class="t" style="left:1134.3px;top:313.9px;font-size:11px;color:#1f2330;">×</span>
<span class="t" style="left:1134.3px;top:364.6px;font-size:11px;color:#1f2330;">×</span>
<span class="t" style="left:1134.3px;top:415.3px;font-size:11px;color:#1f2330;">×</span>
<span class="t" style="left:1134.3px;top:466.1px;font-size:11px;color:#1f2330;">×</span>
<span class="t" style="left:1134.3px;top:516.8px;font-size:11px;color:#1f2330;">×</span>

  <!-- big marker -->
  <div class="a" style="left:733.9px;top:380.1px;width:135px;height:125.2px;border-radius:50%;background:#ba0c2f;"></div>
  <span class="t" style="left:777px;top:393.5px;font-size:97.5px;color:#fff;-webkit-text-stroke:.6px #fff;transform:scaleX(1.08);transform-origin:29px 50%;clip-path:polygon(0 0,33.7px 0,33.7px 97px,24.2px 97px,24.2px 71px,0 71px);">1</span>
</div>
</body>
</html>
